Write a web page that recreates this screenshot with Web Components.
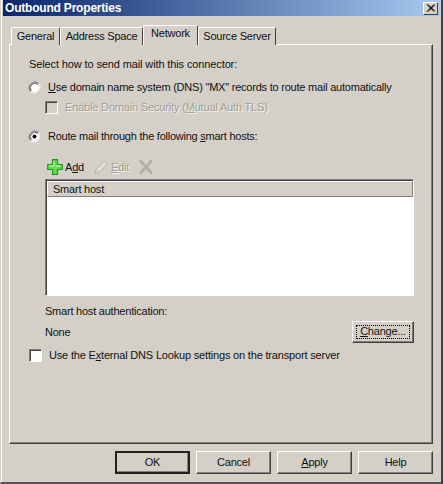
<!DOCTYPE html>
<html>
<head>
<meta charset="utf-8">
<title>Outbound Properties</title>
<style>
  html, body { margin: 0; padding: 0; background: #d4d0c8; }
  body { font: 11px/14px "Liberation Sans", Arial, sans-serif; letter-spacing: -0.22px; color: #000; }
</style>
</head>
<body>
<x-dialog caption="Outbound Properties">
  <x-tabs slot="tabs">
    <x-tab style="width:49px">General</x-tab>
    <x-tab style="width:83px">Address Space</x-tab>
    <x-tab active style="width:55px">Network</x-tab>
    <x-tab style="width:78px">Source Server</x-tab>
  </x-tabs>
  <x-network-page slot="page"></x-network-page>
  <x-button slot="actions" default>OK</x-button>
  <x-button slot="actions">Cancel</x-button>
  <x-button slot="actions"><u>A</u>pply</x-button>
  <x-button slot="actions">Help</x-button>
</x-dialog>

<script>
class XDialog extends HTMLElement {
  constructor() {
    super();
    this.attachShadow({ mode: 'open' });
    this.shadowRoot.innerHTML = `
      <style>
        :host {
          display: flex;
          flex-direction: column;
          box-sizing: border-box;
          width: 443px;
          height: 484px;
          background: #d4d0c8;
          border-left: 1px solid #d4d0c8;
          border-right: 2px solid #404040;
          border-bottom: 2px solid #55544f;
          box-shadow: inset 1px 0 0 #fff;
          overflow: hidden;
        }
        .title {
          display: flex;
          align-items: center;
          justify-content: space-between;
          height: 16px;
          flex-shrink: 0;
          margin: 0 1px 0 2px;
          padding: 0 2px 0 2px;
          background: linear-gradient(90deg, #0a246a, #a6caf0);
          color: #fff;
          font-weight: bold;
          font-size: 12px;
          line-height: 15px;
          letter-spacing: -0.2px;
        }
        .close {
          box-sizing: border-box;
          width: 15px;
          height: 13px;
          background: #d4d0c8;
          border: 1px solid;
          border-color: #fff #404040 #404040 #fff;
          display: flex;
        }
        .close svg { display: block; margin: auto; }
        .body {
          flex: 1;
          display: flex;
          flex-direction: column;
          padding: 10px 8px 8px 8px;
          min-height: 0;
        }
        .page {
          flex: 1;
          min-height: 0;
          box-sizing: border-box;
          border: 1px solid;
          border-color: #fff #404040 #404040 #fff;
          box-shadow: inset -1px -1px 0 #808080;
        }
        .actions {
          display: flex;
          justify-content: flex-end;
          gap: 6px;
          margin-top: 7px;
        }
      </style>
      <div class="title">
        <span id="cap"></span>
        <span class="close"><svg width="9" height="8" viewBox="0 0 9 8"><path d="M1 0.5 L8 7.5 M2 0.5 L9 7.5 M8 0.5 L1 7.5 M9 0.5 L2 7.5" stroke="#000" stroke-width="1" fill="none"/></svg></span>
      </div>
      <div class="body">
        <slot name="tabs"></slot>
        <div class="page"><slot name="page"></slot></div>
        <div class="actions"><slot name="actions"></slot></div>
      </div>
    `;
    this.shadowRoot.getElementById('cap').textContent = this.getAttribute('caption');
  }
}

class XTabs extends HTMLElement {
  constructor() {
    super();
    this.attachShadow({ mode: 'open' });
    this.shadowRoot.innerHTML = `
      <style>
        :host {
          display: flex;
          align-items: flex-end;
          height: 19px;
          padding-left: 2px;
          position: relative;
          z-index: 1;
          margin-bottom: -1px;
        }
      </style>
      <slot></slot>
    `;
  }
}

class XTab extends HTMLElement {
  constructor() {
    super();
    this.attachShadow({ mode: 'open' });
    this.shadowRoot.innerHTML = `
      <style>
        :host {
          display: block;
          box-sizing: border-box;
          flex-shrink: 0;
          height: 18px;
          line-height: 17px;
          text-align: center;
          border: 1px solid;
          border-color: #fff #404040 transparent #fff;
          border-bottom: 0;
          border-radius: 2px 2px 0 0;
          background: #d4d0c8;
          white-space: nowrap;
          color: #111;
        }
        :host([active]) {
          height: 20px;
          line-height: 15px;
        }
      </style>
      <slot></slot>
    `;
  }
}

class XButton extends HTMLElement {
  constructor() {
    super();
    this.attachShadow({ mode: 'open' });
    this.shadowRoot.innerHTML = `
      <style>
        :host {
          display: block;
          box-sizing: border-box;
          width: 75px;
          height: 23px;
          border: 1px solid;
          border-color: #fff #404040 #404040 #fff;
          box-shadow: inset -1px -1px 0 #808080;
          background: #d4d0c8;
          text-align: center;
          line-height: 20px;
          color: #111;
        }
        :host([default]) {
          border: 2px solid #222;
          line-height: 18px;
        }
        :host([focused]) { outline: 1px dotted #000; outline-offset: -5px; }
      </style>
      <slot></slot>
    `;
  }
}

class XRadio extends HTMLElement {
  constructor() {
    super();
    this.attachShadow({ mode: 'open' });
    this.shadowRoot.innerHTML = `
      <style>
        :host { display: flex; align-items: center; gap: 7px; height: 16px; white-space: nowrap; color: #111; }
        svg { flex-shrink: 0; display: block; }
      </style>
      <svg width="13" height="13" viewBox="0 0 13 13">
        <path d="M10.7 2.3 A6 6 0 0 0 2.3 10.7" fill="none" stroke="#808080"/>
        <path d="M2.3 10.7 A6 6 0 0 0 10.7 2.3" fill="none" stroke="#f4f3f0"/>
        <circle cx="6.5" cy="6.5" r="4.7" fill="#fff"/>
        <path d="M9.8 3.2 A4.7 4.7 0 0 0 3.2 9.8" fill="none" stroke="#404040"/>
        ${this.hasAttribute('checked') ? '<circle cx="6.5" cy="6.5" r="2" fill="#000"/>' : ''}
      </svg>
      <span><slot></slot></span>
    `;
  }
}

class XCheck extends HTMLElement {
  constructor() {
    super();
    this.attachShadow({ mode: 'open' });
    const off = this.hasAttribute('disabled');
    this.shadowRoot.innerHTML = `
      <style>
        :host { display: flex; align-items: center; gap: 7px; height: 16px; white-space: nowrap; color: #111; }
        :host([disabled]) { color: #a09e98; text-shadow: 1px 1px 0 #f4f3ef; }
        .box {
          box-sizing: border-box;
          flex-shrink: 0;
          width: 13px;
          height: 13px;
          border: 1px solid;
          border-color: #808080 #fff #fff #808080;
          box-shadow: inset 1px 1px 0 #404040;
          background: ${off ? '#d4d0c8' : '#fff'};
        }
      </style>
      <span class="box"></span>
      <span><slot></slot></span>
    `;
  }
}

class XToolbar extends HTMLElement {
  constructor() {
    super();
    this.attachShadow({ mode: 'open' });
    this.shadowRoot.innerHTML = `
      <style>
        :host { display: flex; align-items: center; height: 20px; color: #111; white-space: nowrap; }
        .item { display: flex; align-items: center; gap: 2px; }
        .add { width: 46px; }
        .edit { width: 45px; color: #a09e98; text-shadow: 1px 1px 0 #f4f3ef; }
        svg { display: block; flex-shrink: 0; }
      </style>
      <span class="item add">
        <svg width="16" height="16" viewBox="0 0 16 16">
          <path d="M5.5 0.7 H10.5 V5.5 H15.3 V10.5 H10.5 V15.3 H5.5 V10.5 H0.7 V5.5 H5.5 Z" fill="#62dc4c" stroke="#1f9a22" stroke-width="1.2"/>
          <path d="M7 2.5 V7 H2.5 M9 7 H13.5" fill="none" stroke="#b4f59c" stroke-width="1.4"/>
        </svg>
        <span>A<u>d</u>d</span>
      </span>
      <span class="item edit">
        <svg width="16" height="16" viewBox="0 0 16 16">
          <path d="M1.5 15 L3 10.5 L11.5 2 L14.5 5 L6 13.5 Z" fill="#e2e0da" stroke="#b4b2ac"/>
          <path d="M3 10.5 L6 13.5" fill="none" stroke="#b4b2ac"/>
        </svg>
        <span><u>E</u>dit</span>
      </span>
      <svg width="16" height="16" viewBox="0 0 16 16">
        <path d="M2 1.5 L14 14.5 M14 1.5 L2 14.5" stroke="#b0aea7" stroke-width="2.6" fill="none"/>
      </svg>
    `;
  }
}

class XList extends HTMLElement {
  constructor() {
    super();
    this.attachShadow({ mode: 'open' });
    this.shadowRoot.innerHTML = `
      <style>
        :host {
          display: block;
          box-sizing: border-box;
          height: 117px;
          border: 1px solid;
          border-color: #808080 #fff #fff #808080;
          box-shadow: inset 1px 1px 0 #404040;
          background: #fff;
          padding: 1px 0 0 1px;
        }
        .head {
          box-sizing: border-box;
          height: 16px;
          line-height: 14px;
          padding-left: 5px;
          background: #d4d0c8;
          border: 1px solid;
          border-color: #fff #808080 #808080 #fff;
          color: #111;
        }
      </style>
      <div class="head"><slot></slot></div>
    `;
  }
}

class XNetworkPage extends HTMLElement {
  constructor() {
    super();
    this.attachShadow({ mode: 'open' });
    this.shadowRoot.innerHTML = `
      <style>
        :host {
          display: flex;
          flex-direction: column;
          padding: 12px 18px 0 18px;
          color: #111;
        }
        .lead { margin-left: 1px; letter-spacing: -0.12px; }
        .r1 { margin-top: 8px; }
        .c1 { margin-top: 4px; margin-left: 17px; letter-spacing: -0.17px; }
        .r2 { margin-top: 13px; letter-spacing: -0.24px; }
        .tb { margin-top: 13px; margin-left: 19px; }
        .lst { margin-top: 2px; margin-left: 17px; }
        .auth { margin-top: 8px; margin-left: 17px; }
        .row { display: flex; align-items: center; justify-content: space-between; margin: 3px 0 0 17px; height: 22px; }
        .ext { margin-top: 4px; margin-left: 1px; letter-spacing: -0.18px; }
        .change { width: 62px; height: 22px; line-height: 19px; }
      </style>
      <div class="lead">Select how to send mail with this connector:</div>
      <x-radio class="r1"><u>U</u>se domain name system (DNS) "MX" records to route mail automatically</x-radio>
      <x-check class="c1" disabled>Enable Domain Security (<u>M</u>utual Auth TLS)</x-check>
      <x-radio class="r2" checked>Route mail through the following <u>s</u>mart hosts:</x-radio>
      <x-toolbar class="tb"></x-toolbar>
      <x-list class="lst">Smart host</x-list>
      <div class="auth">Smart host authentication:</div>
      <div class="row">
        <span>None</span>
        <x-button class="change" focused><u>C</u>hange...</x-button>
      </div>
      <x-check class="ext">Use the E<u>x</u>ternal DNS Lookup settings on the transport server</x-check>
    `;
  }
}

customElements.define('x-dialog', XDialog);
customElements.define('x-tabs', XTabs);
customElements.define('x-tab', XTab);
customElements.define('x-button', XButton);
customElements.define('x-radio', XRadio);
customElements.define('x-check', XCheck);
customElements.define('x-toolbar', XToolbar);
customElements.define('x-list', XList);
customElements.define('x-network-page', XNetworkPage);
</script>
</body>
</html>
